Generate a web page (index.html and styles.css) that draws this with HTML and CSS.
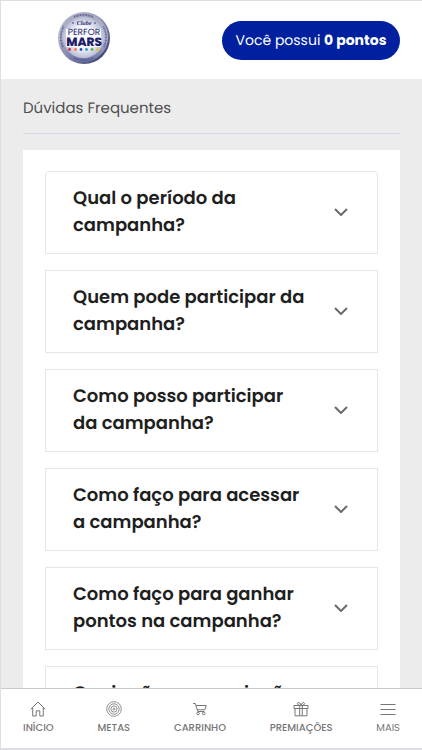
FILE: index.html
```
<!DOCTYPE html>
<html lang="pt-BR">
<head>
<meta charset="utf-8">
<meta name="viewport" content="width=device-width, initial-scale=1">
<title>Dúvidas Frequentes</title>
<link rel="stylesheet" href="styles.css">
</head>
<body>
<div class="app">
  <header class="header">
    <a class="logo" href="#" aria-label="Clube Performars">
      <svg viewBox="0 0 54 56" width="54" height="56">
        <defs>
          <radialGradient id="face"><stop offset="0" stop-color="#fff"/><stop offset=".55" stop-color="#f4f5fa"/><stop offset="1" stop-color="#b9bdd6"/></radialGradient>
          <linearGradient id="rim" x1="0" y1="0" x2="1" y2="1"><stop offset="0" stop-color="#d3d5df"/><stop offset=".5" stop-color="#8d91b0"/><stop offset="1" stop-color="#23275f"/></linearGradient>
          <linearGradient id="band" x1="0" y1="0" x2="0" y2="1"><stop offset="0" stop-color="#a4a8c0"/><stop offset=".5" stop-color="#b7bbd0"/><stop offset="1" stop-color="#6a70a0"/></linearGradient>
        </defs>
        <circle cx="27" cy="28" r="26" fill="url(#rim)"/>
        <circle cx="26.500" cy="27.500" r="24.500" fill="url(#band)"/>
        <circle cx="26.500" cy="27.500" r="20.500" fill="url(#face)"/>
        <g fill="none" stroke="#4a5088" stroke-width="1.800" stroke-dasharray="1.200 .6 .8 .5" opacity=".75">
          <path d="M17 7a22.600 22.600 0 0 1 19 0M6 37a22.600 22.600 0 0 1 1-21M47 37a22.600 22.600 0 0 0-1-21M17 48a22.600 22.600 0 0 0 19 0"/>
        </g>
        <path d="M9 19h35v18H9z" fill="#f8f9fc"/>
        <text class="logo-script" x="27" y="15" text-anchor="middle">Clube</text>
        <circle cx="16" cy="13" r=".8" fill="#2c2f78"/><circle cx="38" cy="13" r=".8" fill="#2c2f78"/>
        <text class="logo-top" x="27" y="25" text-anchor="middle">PERFOR</text>
        <text class="logo-main" x="27" y="36" text-anchor="middle">MARS</text>
        <circle cx="12.500" cy="39.500" r="1.400" fill="#d3283d"/><circle cx="18.500" cy="39.500" r="1.400" fill="#ec7d31"/><circle cx="24" cy="39.500" r="1.400" fill="#2350b5"/><circle cx="29.500" cy="39.500" r="1.400" fill="#259ac9"/><circle cx="35" cy="39.500" r="1.400" fill="#69ae4b"/><circle cx="40.500" cy="39.500" r="1.400" fill="#edc332"/>
      </svg>
    </a>
    <a class="points" href="#"><span>Você possui <b>0 pontos</b></span></a>
  </header>

  <main class="content">
    <h1 class="title">Dúvidas Frequentes</h1>
    <section class="faq">
      <button class="question" type="button" aria-expanded="false"><span>Qual o período da<br>campanha?</span><svg class="chevron" viewBox="0 0 14 8"><path d="M1 1l6 6 6-6"/></svg></button>
      <button class="question" type="button" aria-expanded="false"><span>Quem pode participar da<br>campanha?</span><svg class="chevron" viewBox="0 0 14 8"><path d="M1 1l6 6 6-6"/></svg></button>
      <button class="question" type="button" aria-expanded="false"><span>Como posso participar<br>da campanha?</span><svg class="chevron" viewBox="0 0 14 8"><path d="M1 1l6 6 6-6"/></svg></button>
      <button class="question" type="button" aria-expanded="false"><span>Como faço para acessar<br>a campanha?</span><svg class="chevron" viewBox="0 0 14 8"><path d="M1 1l6 6 6-6"/></svg></button>
      <button class="question" type="button" aria-expanded="false"><span>Como faço para ganhar<br>pontos na campanha?</span><svg class="chevron" viewBox="0 0 14 8"><path d="M1 1l6 6 6-6"/></svg></button>
      <button class="question" type="button" aria-expanded="false"><span>Quais são as premiações<br>da campanha?</span><svg class="chevron" viewBox="0 0 14 8"><path d="M1 1l6 6 6-6"/></svg></button>
    </section>
  </main>

  <nav class="nav">
    <a class="nav-item" href="#">
      <svg viewBox="0 0 16 16"><path d="M.7 8.300L8 1l7.300 7.300M2.700 6.800v8.200h3.500V9.800h3.600V15h3.500V6.800"/></svg>
      <span>INÍCIO</span>
    </a>
    <a class="nav-item" href="#">
      <svg viewBox="0 0 16 16"><g stroke-width=".8"><circle cx="8" cy="8" r="7.300"/><circle cx="8" cy="8" r="5.200"/><circle cx="8" cy="8" r="3.100"/><circle cx="8" cy="8" r="1"/></g></svg>
      <span>METAS</span>
    </a>
    <a class="nav-item" href="#">
      <svg viewBox="0 0 16 16"><path d="M1 2.500h2.300l2.500 8h6.700M4 4.500h10.300l-1.600 4.300H5.300"/><circle cx="6" cy="12.500" r="1.300"/><circle cx="11.700" cy="12.500" r="1.300"/></svg>
      <span>CARRINHO</span>
    </a>
    <a class="nav-item" href="#">
      <svg viewBox="0 0 16 16"><path d="M1 4.500h14v3H1zM2 7.500h12v7.300H2zM6.700 4.500v10.300M9.300 4.500v10.300M8 4.500C5.500 4.500 4.200 3.500 4.500 2.300 5 .8 7.500 1.500 8 4.500c.5-3 3-3.700 3.500-2.200.3 1.200-1 2.200-3.500 2.200"/></svg>
      <span>PREMIAÇÕES</span>
    </a>
    <a class="nav-item nav-item-more" href="#">
      <svg viewBox="0 0 16 16"><path d="M.5 3.500h15M.5 8.500h15M.5 13.500h15"/></svg>
      <span>MAIS</span>
    </a>
  </nav>
</div>
</body>
</html>
```
FILE: styles.css
```
* {
  box-sizing: border-box;
}

body {
  margin: 0;
  font-family: Poppins, Inter, "Open Sans", sans-serif;
  text-rendering: geometricPrecision;
  background: #fff;
}

a {
  color: inherit;
  text-decoration: none;
}

.app {
  display: flex;
  flex-direction: column;
  height: 100vh;
  border: solid #dedfe3;
  border-width: 1px 0 2px 1px;
  background: #ececec;
}

.header {
  display: flex;
  flex: none;
  align-items: center;
  justify-content: space-between;
  height: 78px;
  padding: 0 22px 0 56px;
  background: #fff;
}

.logo {
  display: flex;
  margin-bottom: 4px;
}

.logo-script {
  font: italic bold 6px "Liberation Serif", serif;
  fill: #2c2f78;
}

.logo-top {
  font-size: 9px;
  fill: #292b70;
}

.logo-main {
  font-size: 12px;
  font-weight: 800;
  fill: #1e2068;
}

.points {
  display: flex;
  align-items: center;
  justify-content: center;
  width: 178px;
  height: 39px;
  border-radius: 20px;
  background: #00209f;
  color: #fff;
  font-size: 14px;
  white-space: nowrap;
}

.points b {
  font-weight: 700;
}

.content {
  flex: 1;
  min-height: 0;
  overflow: hidden;
  padding: 0 22px;
}

.title {
  margin: 0 0 16px;
  padding: 18px 0 12px;
  border-bottom: 1px solid #d5d9e6;
  color: #505050;
  font-size: 15px;
  font-weight: 400;
  line-height: 24px;
}

.faq {
  display: flex;
  flex-direction: column;
  gap: 16px;
  padding: 21px 22px;
  background: #fff;
}

.question {
  display: flex;
  align-items: center;
  justify-content: space-between;
  padding: 13px 29px 14px 27px;
  border: 1px solid #e6e6e9;
  background: #fff;
  color: #1f1f1f;
  font-family: inherit;
  font-size: 18px;
  font-weight: 600;
  line-height: 27px;
  text-align: left;
  text-rendering: inherit;
  white-space: nowrap;
}

.question:first-child {
  border-radius: 4px 4px 0 0;
}

.chevron {
  flex: none;
  width: 14px;
  height: 8px;
  fill: none;
  stroke: #6b6b6b;
  stroke-width: 2;
}

.nav {
  display: flex;
  flex: none;
  justify-content: space-between;
  padding: 12px 22px 13px;
  border-top: 1px solid #c9c9c9;
  background: #fff;
}

.nav-item {
  display: flex;
  flex-direction: column;
  align-items: center;
  gap: 3px;
  color: #777;
  font-size: 10px;
  font-weight: 500;
  line-height: 15px;
}

.nav-item-more {
  font-weight: 400;
}

.nav-item svg {
  width: 16px;
  height: 16px;
  fill: none;
  stroke: #777;
  stroke-width: 1;
}
```
